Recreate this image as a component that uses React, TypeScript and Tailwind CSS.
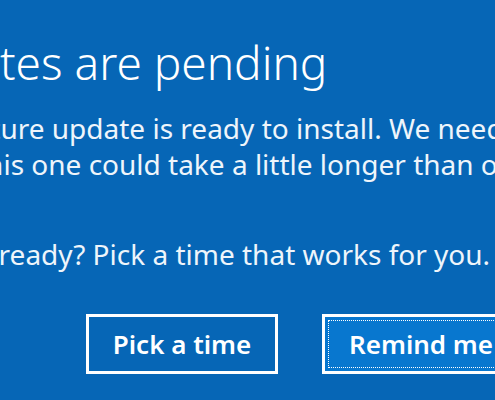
export default function App() {
  return (
    <div className="w-[495px] h-[400px] overflow-hidden bg-[#0666b6] text-white font-['Noto_Sans',sans-serif]">
      <div className="flex flex-col pt-[34px]">
        <div className="whitespace-nowrap text-[46px] leading-[56px] font-light ml-[-113px]">
          Updates are pending
        </div>
        <div className="mt-[20px] flex flex-col text-[28px] leading-[36px] text-[#eef5fb]">
          <div className="whitespace-nowrap ml-[-76px]">
            A feature update is ready to install. We need to restart
          </div>
          <div className="whitespace-nowrap ml-[-24px]">
            this one could take a little longer than others.
          </div>
          <div className="whitespace-nowrap ml-[-57px] mt-[54px]">
            Not ready? Pick a time that works for you.
          </div>
        </div>
        <div className="mt-[42px] flex gap-[44px] pl-[86px]">
          <button className="w-[192px] h-[60px] shrink-0 border-[3px] border-white bg-[#0666b6] flex items-center justify-center text-[26px] font-semibold">
            Pick a time
          </button>
          <button className="w-[200px] h-[60px] shrink-0 border-[3px] border-white bg-[#0877cf] p-[3px] flex">
            <span className="flex-1 border border-dotted border-white flex items-center justify-start pl-[20px] text-[26px] font-semibold whitespace-nowrap overflow-hidden">
              Remind me later
            </span>
          </button>
        </div>
      </div>
    </div>
  );
}
